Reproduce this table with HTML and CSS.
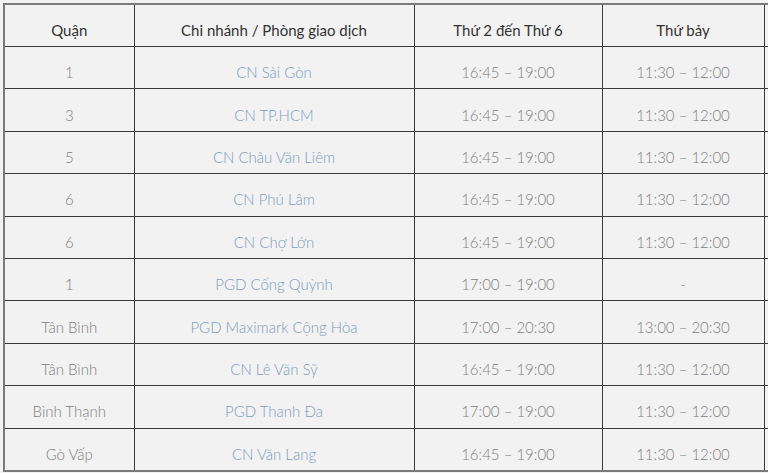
FILE: index.html
```html
<!DOCTYPE html>
<html lang="vi">
<head>
<meta charset="utf-8">
<link rel="stylesheet" href="styles.css">
</head>
<body>
<div class="wrap">
<table class="schedule">
<colgroup>
<col class="c1"><col class="c2"><col class="c3"><col class="c4"><col class="c5">
</colgroup>
<thead>
<tr><th>Quận</th><th>Chi nhánh / Phòng giao dịch</th><th>Thứ 2 đến Thứ 6</th><th>Thứ bảy</th><th></th></tr>
</thead>
<tbody>
<tr><td>1</td><td><a class="lnk">CN Sài Gòn</a></td><td>16:45 – 19:00</td><td>11:30 – 12:00</td><td></td></tr>
<tr><td>3</td><td><a class="lnk">CN TP.HCM</a></td><td>16:45 – 19:00</td><td>11:30 – 12:00</td><td></td></tr>
<tr><td>5</td><td><a class="lnk">CN Châu Văn Liêm</a></td><td>16:45 – 19:00</td><td>11:30 – 12:00</td><td></td></tr>
<tr><td>6</td><td><a class="lnk">CN Phú Lâm</a></td><td>16:45 – 19:00</td><td>11:30 – 12:00</td><td></td></tr>
<tr><td>6</td><td><a class="lnk">CN Chợ Lớn</a></td><td>16:45 – 19:00</td><td>11:30 – 12:00</td><td></td></tr>
<tr><td>1</td><td><a class="lnk">PGD Cống Quỳnh</a></td><td>17:00 – 19:00</td><td>-</td><td></td></tr>
<tr><td>Tân Bình</td><td><a class="lnk">PGD Maximark Cộng Hòa</a></td><td>17:00 – 20:30</td><td>13:00 – 20:30</td><td></td></tr>
<tr><td>Tân Bình</td><td><a class="lnk">CN Lê Văn Sỹ</a></td><td>16:45 – 19:00</td><td>11:30 – 12:00</td><td></td></tr>
<tr><td>Bình Thạnh</td><td><a class="lnk">PGD Thanh Đa</a></td><td>17:00 – 19:00</td><td>11:30 – 12:00</td><td></td></tr>
<tr><td>Gò Vấp</td><td><a class="lnk">CN Văn Lang</a></td><td>16:45 – 19:00</td><td>11:30 – 12:00</td><td></td></tr>
</tbody>
</table>
</div>
</body>
</html>
```

FILE: styles.css
```css
html, body {
  margin: 0;
  padding: 0;
  background: #f2f2f2;
  overflow: hidden;
  width: 768px;
  height: 473px;
}
.wrap {
  padding: 3px 0 0 3px;
}
.schedule {
  border-collapse: collapse;
  table-layout: fixed;
  width: 960px;
  background: #f2f2f2;
  font-family: Lato, "Noto Sans", sans-serif;
  font-size: 15px;
  border: 2px solid #7a7a7a;
}
.c1 { width: 130px; }
.c2 { width: 280px; }
.c3 { width: 188px; }
.c4 { width: 162px; }
.c5 { width: 200px; }
.schedule th,
.schedule td {
  border: 1px solid #3a3a3a;
  text-align: center;
  padding: 9px 4px 0 4px;
  height: 32.4px;
  vertical-align: middle;
}
.schedule tr:first-child th { border-top: 2px solid #7a7a7a; }
.schedule th:first-child, .schedule td:first-child { border-left: 2px solid #7a7a7a; }
.schedule tbody tr:last-child td { border-bottom: 2px solid #7a7a7a; }
.schedule th {
  font-weight: 400;
  color: #333;
  height: 32px;
}
.schedule td {
  color: #808080;
  font-weight: 300;
}
.lnk {
  color: #7d9dbf;
  text-decoration: none;
}
```
